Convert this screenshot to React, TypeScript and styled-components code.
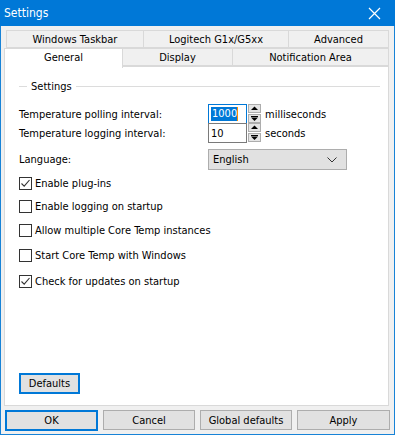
import styled, { createGlobalStyle } from "styled-components";

const Global = createGlobalStyle`
  html, body { margin: 0; padding: 0; background: #ffffff; }
  * { box-sizing: border-box; }
`;

const font = `"DejaVu Sans Condensed", Lato, sans-serif`;

const Window = styled.div`
  width: 395px;
  height: 435px;
  display: flex;
  flex-direction: column;
  border: 1px solid #1883d7;
  border-top: none;
  background: #f0f0f0;
  font-family: ${font};
  font-stretch: condensed;
  font-size: 11px;
  color: #000;
`;

const TitleBar = styled.div`
  height: 26px;
  margin: 0 -1px;
  background: #0078d7;
  color: #fff;
  display: flex;
  align-items: center;
  justify-content: space-between;
  padding: 0 14px 0 4px;
  font-size: 12px;
`;

const Body = styled.div`
  flex: 1;
  display: flex;
  flex-direction: column;
  padding: 4px 2px 0 2px;
`;

const TabRow = styled.div<{ $indent: number }>`
  display: flex;
  height: 18px;
  margin-left: ${(p) => p.$indent}px;
  margin-right: 3px;
  align-items: flex-end;
`;

const Tab = styled.div<{ $w: number; $active?: boolean }>`
  width: ${(p) => p.$w}px;
  height: ${(p) => (p.$active ? 20 : 18)}px;
  display: flex;
  align-items: center;
  justify-content: center;
  background: ${(p) => (p.$active ? "#fff" : "#f0f0f0")};
  border: 1px solid #d9d9d9;
  border-bottom: ${(p) => (p.$active ? "none" : "1px solid #d9d9d9")};
  margin-left: -1px;
  position: relative;
  z-index: ${(p) => (p.$active ? 2 : 1)};
  margin-bottom: ${(p) => (p.$active ? -2 : 0)}px;
  padding-bottom: ${(p) => (p.$active ? 2 : 0)}px;
`;

const Panel = styled.div`
  height: 340px;
  margin: 0 3px 0 1px;
  background: #fff;
  border: 1px solid #d9d9d9;
  position: relative;
  z-index: 1;
  display: flex;
  flex-direction: column;
  padding: 11px 14px 0 14px;
`;

const Group = styled.div`
  display: flex;
  align-items: center;
  gap: 4px;
  height: 16px;
  &::before {
    content: "";
    width: 8px;
    border-top: 1px solid #dcdcdc;
  }
  &::after {
    content: "";
    flex: 1;
    border-top: 1px solid #dcdcdc;
    margin-right: -6px;
  }
`;

const Row = styled.div<{ $mt: number }>`
  display: flex;
  align-items: center;
  margin-top: ${(p) => p.$mt}px;
`;

const Label = styled.div`
  width: 189px;
`;

const SpinBox = styled.div`
  display: flex;
  align-items: center;
  gap: 4px;
`;

const SpinWrap = styled.div`
  display: flex;
`;

const Input = styled.div<{ $focus?: boolean }>`
  width: 39px;
  height: 20px;
  border: 1px solid ${(p) => (p.$focus ? "#0078d7" : "#7a7a7a")};
  background: #fff;
  display: flex;
  align-items: center;
  padding-left: 2px;
`;

const Selected = styled.span`
  background: #0078d7;
  color: #fff;
  border-right: 1px solid #ff8c00;
  line-height: 14px;
  padding-left: 1px;
`;

const Spinner = styled.div`
  width: 14px;
  height: 20px;
  display: flex;
  flex-direction: column;
`;

const SpinBtn = styled.div`
  flex: 1;
  background: #e5e5e5;
  border: 1px solid #adadad;
  margin: 0 0 1px 1px;
  display: flex;
  align-items: center;
  justify-content: center;
`;

const Combo = styled.div`
  width: 139px;
  height: 21px;
  background: #e1e1e1;
  border: 1px solid #adadad;
  display: flex;
  align-items: center;
  justify-content: space-between;
  padding: 0 9px 0 4px;
`;

const CheckRow = styled.label<{ $mt: number }>`
  display: flex;
  align-items: center;
  gap: 3px;
  margin-top: ${(p) => p.$mt}px;
  height: 16px;
`;

const Box = styled.span`
  width: 13px;
  height: 13px;
  border: 1px solid #333;
  background: #fff;
  display: flex;
  align-items: center;
  justify-content: center;
`;

const Spacer = styled.div`
  flex: 1;
`;

const Button = styled.div<{ $w: number; $default?: boolean }>`
  width: ${(p) => p.$w}px;
  height: ${(p) => (p.$default ? 21 : 20)}px;
  background: #e1e1e1;
  border: ${(p) => (p.$default ? "2px solid #0078d7" : "1px solid #adadad")};
  display: flex;
  align-items: center;
  justify-content: center;
`;

const DefaultsWrap = styled.div`
  margin: 0 0 11px 0;
`;

const Buttons = styled.div`
  display: flex;
  gap: 5px;
  padding: 4px 0 0 2px;
`;

const Check = () => (
  <svg width="11" height="11" viewBox="0 0 11 11">
    <path d="M1.5 5.5 L4.2 8.2 L9.5 2" fill="none" stroke="#333" strokeWidth="1.1" />
  </svg>
);

const Arrow = ({ up }: { up?: boolean }) => (
  <svg width="7" height="5" viewBox="0 0 7 5">
    {up ? (
      <path d="M0 4 L3.5 0.5 L7 4 Z" fill="#000" />
    ) : (
      <>
        <path d="M0 0.5 H7" stroke="#000" strokeWidth="1" />
        <path d="M0 1.5 L3.5 5 L7 1.5 Z" fill="#000" />
      </>
    )}
  </svg>
);

const Spin = ({ value, focus }: { value: string; focus?: boolean }) => (
  <SpinWrap>
    <Input $focus={focus}>{focus ? <Selected>{value}</Selected> : value}</Input>
    <Spinner>
      <SpinBtn>
        <Arrow up />
      </SpinBtn>
      <SpinBtn>
        <Arrow />
      </SpinBtn>
    </Spinner>
  </SpinWrap>
);

const Checkbox = ({ checked, label, mt }: { checked?: boolean; label: string; mt: number }) => (
  <CheckRow $mt={mt}>
    <Box>{checked && <Check />}</Box>
    {label}
  </CheckRow>
);

export default function App() {
  return (
    <>
      <Global />
      <Window>
        <TitleBar>
          <span>Settings</span>
          <svg width="13" height="13" viewBox="0 0 13 13">
            <path d="M1 1 L12 12 M12 1 L1 12" stroke="#fff" strokeWidth="1.2" />
          </svg>
        </TitleBar>
        <Body>
          <TabRow $indent={4}>
            <Tab $w={138}>Windows Taskbar</Tab>
            <Tab $w={146}>Logitech G1x/G5xx</Tab>
            <Tab $w={101}>Advanced</Tab>
          </TabRow>
          <TabRow $indent={2}>
            <Tab $w={119} $active>General</Tab>
            <Tab $w={111}>Display</Tab>
            <Tab $w={157}>Notification Area</Tab>
          </TabRow>
          <Panel>
            <Group>Settings</Group>
            <Row $mt={10}>
              <Label>Temperature polling interval:</Label>
              <SpinBox>
                <Spin value="1000" focus />
                milliseconds
              </SpinBox>
            </Row>
            <Row $mt={-1}>
              <Label>Temperature logging interval:</Label>
              <SpinBox>
                <Spin value="10" />
                seconds
              </SpinBox>
            </Row>
            <Row $mt={6}>
              <Label>Language:</Label>
              <Combo>
                English
                <svg width="10" height="6" viewBox="0 0 10 6">
                  <path d="M0.5 0.5 L5 5 L9.5 0.5" fill="none" stroke="#333" strokeWidth="1" />
                </svg>
              </Combo>
            </Row>
            <Checkbox checked label="Enable plug-ins" mt={5} />
            <Checkbox label="Enable logging on startup" mt={7} />
            <Checkbox label="Allow multiple Core Temp instances" mt={8} />
            <Checkbox label="Start Core Temp with Windows" mt={9} />
            <Checkbox checked label="Check for updates on startup" mt={10} />
            <Spacer />
            <DefaultsWrap>
              <Button $w={61} $default>Defaults</Button>
            </DefaultsWrap>
          </Panel>
          <Buttons>
            <Button $w={93} $default>OK</Button>
            <Button $w={92}>Cancel</Button>
            <Button $w={92}>Global defaults</Button>
            <Button $w={93}>Apply</Button>
          </Buttons>
        </Body>
      </Window>
    </>
  );
}
